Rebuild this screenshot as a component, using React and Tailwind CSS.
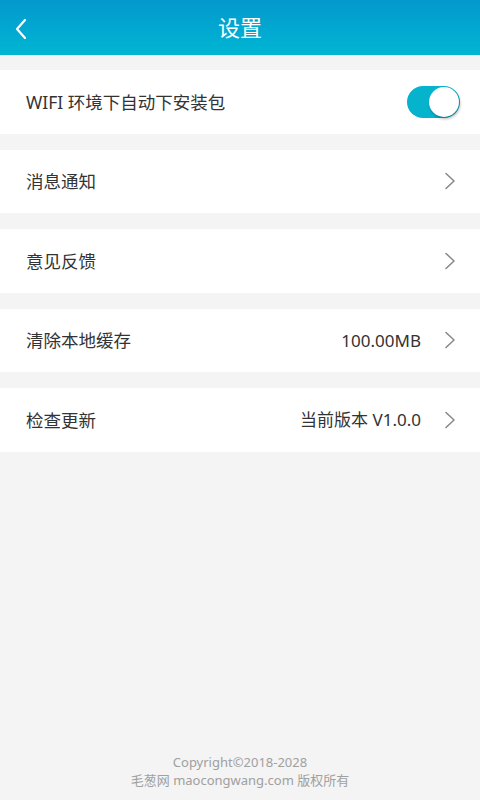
import React from "react";

const Chevron = () => (
  <svg width="12" height="18" viewBox="0 0 12 18" fill="none" className="shrink-0">
    <path d="M2 1.5 L10 9 L2 16.5" stroke="#8a8a8a" strokeWidth="1.6" strokeLinecap="round" strokeLinejoin="round" />
  </svg>
);

const Row = ({ label, value, children }) => (
  <div className="flex h-[63.5px] items-center bg-white pl-[26px] pr-[24px] mt-[16px] first:mt-[15px]">
    <span className="flex-1 text-[17.5px] text-[#333333]">{label}</span>
    {value && <span className="mr-[23px] text-[17px] text-[#333333]">{value}</span>}
    {children}
  </div>
);

export default function App() {
  return (
    <div
      className="flex min-h-[800px] w-[480px] flex-col bg-[#f4f4f4]"
      style={{ fontFamily: '"Noto Sans", "Noto Sans CJK SC", sans-serif' }}
    >
      <div className="relative flex h-[55px] items-center justify-center bg-gradient-to-b from-[#0498cd] to-[#02b6d3]">
        <svg width="14" height="22" viewBox="0 0 14 22" fill="none" className="absolute left-[14px] top-[18px]">
          <path d="M11 2 L3 11 L11 20" stroke="white" strokeWidth="2.2" strokeLinecap="round" strokeLinejoin="round" />
        </svg>
        <span className="text-[22px] text-white">设置</span>
      </div>

      <div className="flex flex-col">
        <Row label="WIFI 环境下自动下安装包">
          <div className="relative mr-[-4px] h-[32px] w-[53px] rounded-full bg-[#06b3cd]">
            <div className="absolute right-[1px] top-[1px] h-[30px] w-[30px] rounded-full bg-white shadow-[1px_2px_3px_rgba(0,0,0,0.3)]" />
          </div>
        </Row>
        <Row label="消息通知">
          <Chevron />
        </Row>
        <Row label="意见反馈">
          <Chevron />
        </Row>
        <Row label="清除本地缓存" value="100.00MB">
          <Chevron />
        </Row>
        <Row label="检查更新" value="当前版本 V1.0.0">
          <Chevron />
        </Row>
      </div>

      <div className="flex-1" />
      <div className="flex flex-col items-center pb-[11px] text-[13px] leading-[18px] text-[#a0a0a0]">
        <span>Copyright©2018-2028</span>
        <span>毛葱网 maocongwang.com 版权所有</span>
      </div>
    </div>
  );
}
